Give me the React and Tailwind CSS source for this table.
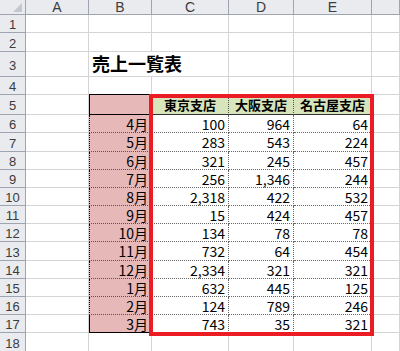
const cols = ["A", "B", "C", "D", "E", ""];

const stores = ["東京支店", "大阪支店", "名古屋支店"];

const sales = [
  ["4月", "100", "964", "64"],
  ["5月", "283", "543", "224"],
  ["6月", "321", "245", "457"],
  ["7月", "256", "1,346", "244"],
  ["8月", "2,318", "422", "532"],
  ["9月", "15", "424", "457"],
  ["10月", "134", "78", "78"],
  ["11月", "732", "64", "454"],
  ["12月", "2,334", "321", "321"],
  ["1月", "632", "445", "125"],
  ["2月", "124", "789", "246"],
  ["3月", "743", "35", "321"],
];

// plain gridline cell
function Cell({ className = "", children }) {
  return (
    <div className={`border-r border-b border-[#d4d4d4] bg-white ${className}`}>{children}</div>
  );
}

function RowNum({ n }) {
  return (
    <div className="flex items-center justify-center pt-[2px] leading-none border-r border-b border-[#9ea5b0] bg-[#e9ebef] text-[13px] text-[#3c3c3c] font-['Liberation_Sans',sans-serif]">
      {n}
    </div>
  );
}

export default function App() {
  const font = "font-['Noto_Sans_CJK_JP',sans-serif]";

  return (
    <div className={`relative w-[400px] h-[351px] overflow-hidden bg-white ${font}`}>
      <div className="grid grid-cols-[26px_63px_63px_77px_65px_78px_28px] grid-rows-[15px_18px_19px_25px_18px_20px_18px_19px_18px_18px_18px_18px_18px_19px_18px_18px_18px_18px_20px]">
        {/* header row */}
        <div className="relative border-r border-b border-[#9ea5b0] bg-[#e9ebef]">
          <svg className="absolute right-[3px] bottom-[2px]" width="9" height="9" viewBox="0 0 9 9">
            <polygon points="9,0 9,9 0,9" fill="#c4c8ce" />
          </svg>
        </div>
        {cols.map((c, i) => (
          <div
            key={i}
            className="flex items-center justify-center leading-none border-r border-b border-[#9ea5b0] bg-[#e9ebef] text-[14px] text-[#3c3c3c] font-['Liberation_Sans',sans-serif]"
          >
            {c}
          </div>
        ))}

        {/* rows 1-2 */}
        {[1, 2].map((r) => (
          <div key={r} className="contents">
            <RowNum n={r} />
            <Cell />
            <Cell />
            <Cell />
            <Cell />
            <Cell />
            <Cell />
          </div>
        ))}

        {/* row 3 title */}
        <RowNum n={3} />
        <Cell />
        <div className="relative border-b border-[#d4d4d4] bg-white">
          <span className="absolute left-[3px] bottom-[4px] whitespace-nowrap text-[18px] leading-none font-bold text-black">
            売上一覧表
          </span>
        </div>
        <Cell />
        <Cell />
        <Cell />
        <Cell />

        {/* row 4 */}
        <RowNum n={4} />
        <Cell />
        <Cell className="border-b-black" />
        <Cell />
        <Cell />
        <Cell />
        <Cell />

        {/* row 5 header */}
        <RowNum n={5} />
        <Cell />
        <div className="border-l border-b border-black bg-[#e6b8b7]" />
        {stores.map((s) => (
          <div
            key={s}
            className="flex items-center justify-center leading-none border-r border-r-[#555] [border-right-style:dotted] border-b border-b-[#333] bg-[#d8e4bc] text-[13px] font-bold text-black"
          >
            {s}
          </div>
        ))}
        <Cell />

        {/* data rows */}
        {sales.map((row, i) => {
          const last = i === sales.length - 1;
          return (
            <div key={row[0]} className="contents">
              <RowNum n={i + 6} />
              <Cell />
              <div
                className={`flex items-center justify-end pr-[4px] leading-none border-l border-l-black border-b bg-[#e6b8b7] text-[14px] text-black ${
                  last ? "border-b-black" : "border-dotted border-b-[#555]"
                }`}
              >
                {row[0]}
              </div>
              {row.slice(1).map((v, j) => (
                <div
                  key={j}
                  className="flex items-center justify-end pr-[3px] leading-none border-r border-b border-dotted border-[#666] bg-white text-[14px] text-black"
                >
                  {v}
                </div>
              ))}
              <Cell />
            </div>
          );
        })}

        {/* row 18 */}
        <RowNum n={18} />
        <Cell />
        <Cell />
        <Cell />
        <Cell />
        <Cell />
        <Cell />
      </div>

      {/* red rectangle drawn over the table */}
      <div className="absolute left-[149px] top-[94px] w-[225px] h-[242px] border-4 border-[#ec1c24] pointer-events-none" />
    </div>
  );
}
